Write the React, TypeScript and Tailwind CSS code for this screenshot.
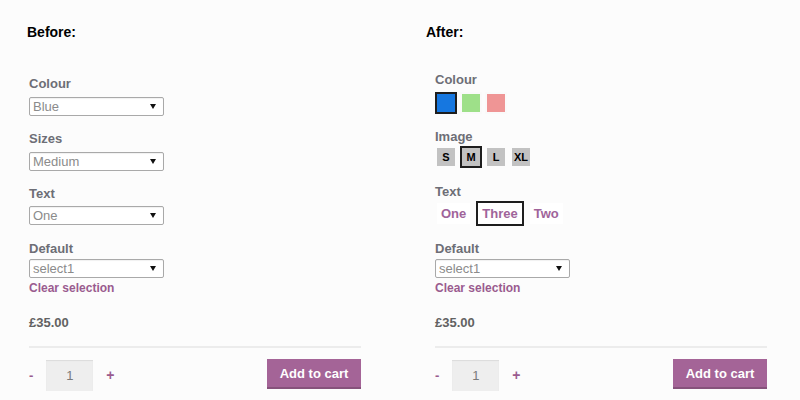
import React from 'react';

const FONT = { fontFamily: '"Liberation Sans", Arial, sans-serif' };

function FakeSelect({ value, className = '' }: { value: string; className?: string }) {
  return (
    <div
      className={`flex items-center justify-between w-[135px] h-[19px] border border-[#a9a9a9] rounded-[2px] bg-white pl-[3px] pr-[7px] shadow-[inset_0_1px_1px_rgba(0,0,0,0.06)] ${className}`}
    >
      <span className="text-[13px] leading-[17px] text-[#8b8b8b]">{value}</span>
      <svg width="6" height="5" viewBox="0 0 6 5">
        <path d="M0 0 H6 L3 5 Z" fill="#111" />
      </svg>
    </div>
  );
}

function Label({ text, className = '' }: { text: string; className?: string }) {
  return <div className={`text-[13px] leading-[18px] font-bold text-[#6d6e76] ${className}`}>{text}</div>;
}

function Footer() {
  return (
    <>
      <div className="mt-[1px] text-[12px] leading-[18px] font-bold text-[#9a5b8f]">Clear selection</div>
      <div className="mt-[17px] text-[13px] leading-[18px] font-bold text-[#626262]">£35.00</div>
      <div className="mt-[14px] h-[2px] bg-[#ececec]" />
      <div className="mt-[12px] flex items-start">
        <span className="mt-[7px] text-[13px] leading-[18px] font-bold text-[#9a5b8f]">-</span>
        <div className="ml-[13px] w-[47px] h-[31px] bg-[#eeeeee] shadow-[inset_0_1px_1px_rgba(0,0,0,0.08)] flex items-center justify-center text-[13px] text-[#7a7a7a]">
          1
        </div>
        <span className="ml-[13px] mt-[6px] text-[14px] leading-[18px] font-bold text-[#9a5b8f]">+</span>
        <button className="ml-auto -mt-[1px] w-[94px] h-[30px] bg-[#a46497] text-white text-[13px] font-bold shadow-[inset_0_-2px_0_rgba(0,0,0,0.18)]">
          Add to cart
        </button>
      </div>
    </>
  );
}

const swatches = [
  { color: 'bg-[#1677e0]', selected: true },
  { color: 'bg-[#9ee089]', selected: false },
  { color: 'bg-[#ef9595]', selected: false },
];

const sizes = [
  { label: 'S', selected: false },
  { label: 'M', selected: true },
  { label: 'L', selected: false },
  { label: 'XL', selected: false },
];

const texts = [
  { label: 'One', selected: false },
  { label: 'Three', selected: true },
  { label: 'Two', selected: false },
];

export default function App() {
  return (
    <div className="w-[800px] h-[400px] bg-[#fcfcfc] flex overflow-hidden" style={FONT}>
      {/* Before */}
      <div className="w-[399px] pl-[27px] pt-[23px]">
        <div className="text-[14px] leading-[18px] font-bold text-black">Before:</div>
        <div className="ml-[2px] w-[332px] flex flex-col">
          <Label text="Colour" className="mt-[34px]" />
          <FakeSelect value="Blue" className="mt-[4px]" />
          <Label text="Sizes" className="mt-[14px]" />
          <FakeSelect value="Medium" className="mt-[4px]" />
          <Label text="Text" className="mt-[14px]" />
          <FakeSelect value="One" className="mt-[3px]" />
          <Label text="Default" className="mt-[15px]" />
          <FakeSelect value="select1" className="mt-[1px]" />
          <Footer />
        </div>
      </div>

      {/* After */}
      <div className="flex-1 pl-[27px] pt-[23px]">
        <div className="text-[14px] leading-[18px] font-bold text-black">After:</div>
        <div className="ml-[9px] w-[332px] flex flex-col">
          <Label text="Colour" className="mt-[30px]" />
          <div className="mt-[3px] flex gap-[3px]">
            {swatches.map((s, i) => (
              <div
                key={i}
                className={`w-[22px] h-[22px] border-2 bg-clip-padding ${s.color} ${
                  s.selected ? 'border-[#1e1e1e]' : 'border-[#fafafa]'
                }`}
              />
            ))}
          </div>
          <Label text="Image" className="mt-[14px]" />
          <div className="flex gap-[3px]">
            {sizes.map((s) => (
              <div
                key={s.label}
                className={`w-[22px] h-[22px] border-2 bg-clip-padding bg-[#c2c2c2] flex items-center justify-center text-[11px] font-bold text-black ${
                  s.selected ? 'border-[#1e1e1e]' : 'border-[#fcfcfc]'
                }`}
              >
                {s.label}
              </div>
            ))}
          </div>
          <Label text="Text" className="mt-[15px]" />
          <div className="flex gap-[4px]">
            {texts.map((t) => (
              <div
                key={t.label}
                className={`h-[25px] px-[4px] border-2 bg-clip-padding bg-white flex items-center text-[13px] font-bold text-[#a0649a] ${
                  t.selected ? 'border-[#1e1e1e]' : 'border-[#fcfcfc]'
                }`}
              >
                {t.label}
              </div>
            ))}
          </div>
          <Label text="Default" className="mt-[14px]" />
          <FakeSelect value="select1" className="mt-[1px]" />
          <Footer />
        </div>
      </div>
    </div>
  );
}
